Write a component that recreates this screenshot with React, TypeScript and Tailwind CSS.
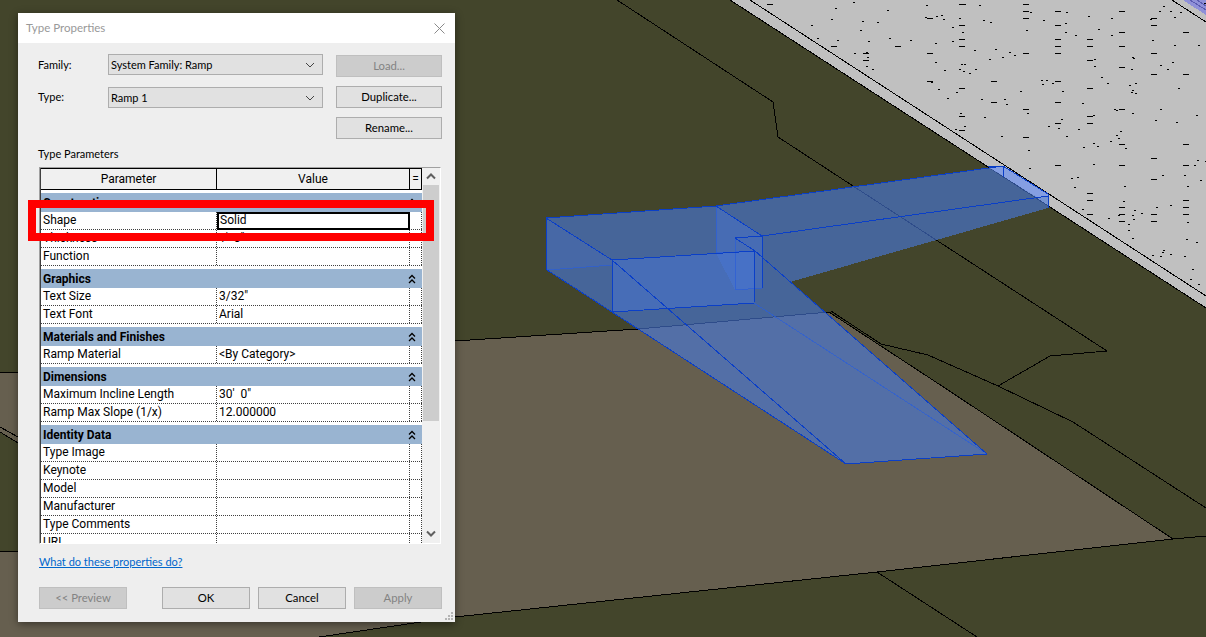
import React from "react";

type Row = { name: string; value?: string };
type Section = { title: string; rows: Row[] };

const sections: Section[] = [
  {
    title: "Construction",
    rows: [
      { name: "Shape", value: "Solid" },
      { name: "Thickness", value: "1'\u00a0\u00a00\"" },
      { name: "Function" },
    ],
  },
  {
    title: "Graphics",
    rows: [
      { name: "Text Size", value: '3/32"' },
      { name: "Text Font", value: "Arial" },
    ],
  },
  {
    title: "Materials and Finishes",
    rows: [{ name: "Ramp Material", value: "<By Category>" }],
  },
  {
    title: "Dimensions",
    rows: [
      { name: "Maximum Incline Length", value: "30'\u00a0\u00a00\"" },
      { name: "Ramp Max Slope (1/x)", value: "12.000000" },
    ],
  },
  {
    title: "Identity Data",
    rows: [
      { name: "Type Image" },
      { name: "Keynote" },
      { name: "Model" },
      { name: "Manufacturer" },
      { name: "Type Comments" },
      { name: "URL" },
    ],
  },
];

// speckle on the concrete slab, seeded so it stays the same between runs
let seed = 7919;
const rand = () => {
  seed = (seed * 16807) % 2147483647;
  return seed / 2147483647;
};

const insideSlab = (x: number, y: number) => y < (x - 750) * 0.65 - 3;

const dashes: string[] = [];
for (let col = 0; col < 14; col++) {
  const x = 767 + col * 32;
  for (let y = 4; y < 310; y += 7) {
    if (rand() < 0.2 && insideSlab(x, y)) dashes.push(`M${x} ${y}h6`);
  }
}
const specks: string[] = [];
for (let i = 0; i < 330; i++) {
  const x = 755 + rand() * 451;
  const y = rand() * 300;
  if (insideSlab(x, y)) {
    const dir = rand();
    specks.push(
      `M${Math.round(x)} ${Math.round(y)}${dir < 0.4 ? "h2" : dir < 0.7 ? "l2 1" : "l2 -1"}`
    );
  }
}

const blackLines = [
  "0,372 18,372",
  "0,427 18,437",
  "0,432 18,443",
  "0,551 14,551 18,552",
  "319,637 455,617 877,572 1173,539 1206,536",
  "455,341 638,329 829,312",
  "829,312 948,390 1031,445 1173,539",
  "831,311 881,344 928,355 998,386 1073,422 1206,508",
  "998,386 1050,356 1107,351 967,260 853,186 778,137 773,102 617,0",
  "877,572 977,637",
  "730,0 1206,308",
  "750,0 1206,296",
  "1172,0 1206,22",
];

const blueLines = [
  "546,218 716,206 1003,166 1048,194 1048,208",
  "546,218 547,270 612,312 846,464 987,454 755,251",
  "546,218 612,260 612,312",
  "612,260 755,251 754,303 612,312",
  "612,260 846,464",
  "716,206 762,236 1048,196",
  "762,236 762,288",
  "735,238 762,236",
  "735,238 755,251 762,257",
  "988,167 1003,166",
  "1003,166 1003,177",
];

const faintLines = [
  "716,206 716,253",
  "735,238 735,290 762,288",
  "754,303 987,454",
  "547,270 612,265",
  "716,253 755,251",
];

function Scene() {
  return (
    <svg
      className="absolute inset-0"
      width={1206}
      height={637}
      viewBox="0 0 1206 637"
      shapeRendering="crispEdges"
    >
      <polygon
        fill="#665f4f"
        points="0,372 18,372 455,341 638,329 829,312 1173,539 877,572 455,617 319,637 0,637 0,552 18,552 18,443 0,432"
      />
      <polygon fill="#c0c0c0" points="730,0 1206,0 1206,308" />
      <polygon fill="#8f90d8" points="1183,0 1206,0 1206,15" />
      <path d="M1190 0L1206 10M1197 0L1206 6" stroke="#5a5bb0" fill="none" />
      <path d={dashes.join("")} stroke="#000" fill="none" />
      <path d={specks.join("")} stroke="#000" fill="none" />
      {blackLines.map((pts) => (
        <polyline key={pts} points={pts} fill="none" stroke="#000" />
      ))}

      {/* ramp, translucent selection colour */}
      <polygon
        fill="#4978db"
        fillOpacity={0.63}
        points="546,218 716,206 1003,166 1048,194 1048,208 790,282 987,454 846,464 612,312 547,270"
      />
      <polygon fill="#4978db" fillOpacity={0.45} points="612,260 755,251 754,303 612,312" />
      <polygon fill="#4978db" fillOpacity={0.4} points="716,206 762,236 762,288 735,290 716,253" />
      <polygon fill="#4978db" fillOpacity={0.2} points="546,218 612,260 612,265 547,270" />
      <polygon fill="#92aaf0" fillOpacity={0.55} points="988,167 1003,166 1048,194 1048,197 1037,197" />
      {faintLines.map((pts) => (
        <polyline key={pts} points={pts} fill="none" stroke="#2c5fd6" strokeOpacity={0.75} />
      ))}
      {blueLines.map((pts) => (
        <polyline key={pts} points={pts} fill="none" stroke="#0a3fc8" />
      ))}
    </svg>
  );
}

function Chevron() {
  return (
    <svg width={10} height={6} viewBox="0 0 10 6" className="shrink-0">
      <path d="M1 1l4 4 4-4" fill="none" stroke="#444" />
    </svg>
  );
}

function Select({ value }: { value: string }) {
  return (
    <div className="w-[215px] h-[21px] flex items-center justify-between pl-[2px] pr-[7px] text-[11px] bg-[#e1e1e1] border border-[#adadad]">
      <span>{value}</span>
      <Chevron />
    </div>
  );
}

function Button({
  label,
  width,
  disabled,
}: {
  label: string;
  width: string;
  disabled?: boolean;
}) {
  return (
    <div
      className={
        width +
        " h-[22px] flex items-center justify-center text-[11.3px] border " +
        (disabled
          ? "bg-[#cccccc] border-[#bfbfbf] text-[#838383]"
          : "bg-[#e1e1e1] border-[#adadad] text-black")
      }
    >
      {label}
    </div>
  );
}

function DoubleUp() {
  return (
    <svg width={8} height={10} viewBox="0 0 8 10">
      <path d="M1 4.5l3-3 3 3M1 9l3-3 3 3" fill="none" stroke="#000" strokeWidth={1.3} />
    </svg>
  );
}

function ScrollArrow({ down }: { down?: boolean }) {
  return (
    <div className="h-[17px] flex items-center justify-center">
      <svg width={10} height={7} viewBox="0 0 10 7">
        <path
          d={down ? "M1 1.5l4 4 4-4" : "M1 5.5l4-4 4 4"}
          fill="none"
          stroke="#606060"
          strokeWidth={2}
        />
      </svg>
    </div>
  );
}

function PropertyTable() {
  return (
    <div className="ml-[1px] w-[402px] h-[377px] flex overflow-hidden text-[12px] font-['Roboto',sans-serif] border-t border-l border-t-[#a0a0a0] border-l-[#a0a0a0] border-r border-b border-r-white border-b-white">
      <div className="w-[382px] bg-white border-l border-[#404040] overflow-hidden">
        <div className="h-[22px] flex items-center bg-[#f0f0f0] border-t border-b border-black">
          <div className="w-[176px] h-full leading-[20px] text-center border-r border-black">Parameter</div>
          <div className="w-[193px] h-full leading-[20px] text-center border-r border-black">Value</div>
          <div className="w-[12px] h-full leading-[20px] text-center border-r border-black">=</div>
        </div>
        {sections.map((section) => (
          <div key={section.title}>
            <div className="mt-[3px] h-[19px] flex items-center justify-between pl-[2px] pr-[6px] bg-[#99b4d1] font-bold">
              <span>{section.title}</span>
              <DoubleUp />
            </div>
            {section.rows.map((row) => (
              <div key={row.name} className="h-[18px] flex border-b border-dotted border-[#404040]">
                <div className="w-[176px] pl-[2px] leading-[16px] border-r border-dotted border-[#404040]">
                  {row.name}
                </div>
                {row.name === "Shape" ? (
                  <div className="w-[193px] -mb-px pl-[1px] leading-[13px] bg-white border-2 border-black">
                    {row.value}
                  </div>
                ) : (
                  <div className="w-[193px] pl-[2px] leading-[16px] border-r border-dotted border-[#404040]">
                    {row.value}
                  </div>
                )}
                <div className="w-[12px] border-r border-dotted border-[#404040]" />
              </div>
            ))}
          </div>
        ))}
      </div>
      <div className="flex-1 flex flex-col justify-between bg-[#f0f0f0]">
        <div>
          <ScrollArrow />
          <div className="ml-[1px] w-[16px] h-[236px] bg-[#cdcdcd]" />
        </div>
        <div className="pb-[1px]">
          <ScrollArrow down />
        </div>
      </div>
    </div>
  );
}

function Dialog() {
  return (
    <div className="absolute left-[18px] top-[13px] w-[437px] h-[609px] flex flex-col bg-[#eeeeee] text-black text-[11px] leading-[16px] font-['Lato',sans-serif] shadow-[0_2px_8px_rgba(0,0,0,0.45)]">
      <div className="h-[30px] shrink-0 flex items-center justify-between pl-[8px] pr-[10px] bg-white text-[11.5px] text-[#999999]">
        <span>Type Properties</span>
        <svg width={11} height={11} viewBox="0 0 11 11" shapeRendering="geometricPrecision">
          <path d="M0.5 0.5l10 10M10.5 0.5l-10 10" stroke="#8a8a8a" fill="none" />
        </svg>
      </div>

      <div className="flex-1 flex flex-col pl-[20px] pr-[13px] pt-[11px]">
        <div className="flex items-start h-[23px]">
          <div className="w-[70px] h-[21px] pt-[1px] flex items-center">Family:</div>
          <Select value="System Family: Ramp" />
          <div className="ml-[13px] mt-[1px]">
            <Button label="Load..." width="w-[106px]" disabled />
          </div>
        </div>
        <div className="flex items-start mt-[9px] h-[22px]">
          <div className="w-[70px] h-[21px] flex items-center">Type:</div>
          <div className="mt-[1px]">
            <Select value="Ramp 1" />
          </div>
          <div className="ml-[13px]">
            <Button label="Duplicate..." width="w-[106px]" />
          </div>
        </div>
        <div className="flex justify-end mt-[9px]">
          <Button label="Rename..." width="w-[106px]" />
        </div>
        <div className="mt-[7px] mb-[5px]">Type Parameters</div>

        <PropertyTable />

        <div className="mt-[10px] ml-[1px] text-[#0066cc] underline">What do these properties do?</div>

        <div className="mt-[17px] ml-[1px] flex">
          <Button label="<< Preview" width="w-[88px]" disabled />
          <div className="ml-[35px]">
            <Button label="OK" width="w-[88px]" />
          </div>
          <div className="ml-[8px]">
            <Button label="Cancel" width="w-[88px]" />
          </div>
          <div className="ml-[8px]">
            <Button label="Apply" width="w-[88px]" disabled />
          </div>
        </div>
      </div>

      {/* resize grip */}
      <svg className="absolute right-[1px] bottom-[1px]" width={9} height={9} viewBox="0 0 9 9">
        <path d="M6 0h2v2H6zM3 3h2v2H3zM6 3h2v2H6zM0 6h2v2H0zM3 6h2v2H3zM6 6h2v2H6z" fill="#b4b4b4" />
      </svg>

      {/* red callout drawn over the Shape row */}
      <div className="absolute left-[10px] top-[187px] w-[406px] h-[41px] border-8 border-[#ff0000]" />
    </div>
  );
}

export default function App() {
  return (
    <div className="relative w-[1206px] h-[637px] overflow-hidden bg-[#43452b]">
      <Scene />
      <Dialog />
    </div>
  );
}
